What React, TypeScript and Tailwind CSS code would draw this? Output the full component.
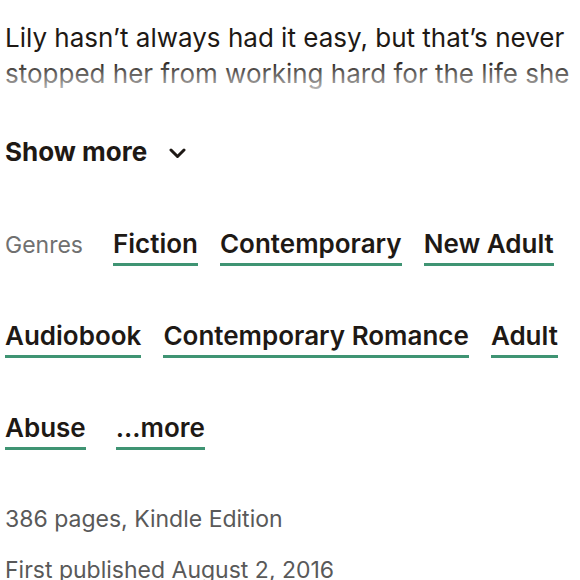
import React from "react";

const genresRow = ["Fiction", "Contemporary", "New Adult", "Audiobook", "Contemporary Romance", "Adult", "Abuse"];

function Genre({ label, className = "" }: { label: string; className?: string }) {
  return (
    <a className={`inline-block border-b-[3px] border-[#3f9473] pb-[3px] text-[26px] font-semibold leading-[32px] text-[#1e1915] ${className}`}>
      {label}
    </a>
  );
}

export default function App() {
  return (
    <div className="min-h-[580px] bg-white px-[5px] font-['Inter',sans-serif] text-[#1e1915]">
      <div className="relative pt-[20px]">
        <p className="max-h-[72px] overflow-hidden text-[26px] leading-[36px]">
          Lily hasn’t always had it easy, but that’s never stopped her from working hard for the life she wants. She’s come a long way from the small town in Maine where she grew up—she graduated from college, moved to Boston, and started her own business.
        </p>
        <div className="pointer-events-none absolute inset-x-0 bottom-0 h-[32px] bg-linear-to-b from-white/0 to-white/75" />
      </div>

      <button className="mt-[42px] flex h-[36px] items-center gap-[22px] text-[26px] font-bold leading-[36px] text-[#1e1915]">
        <span>Show more</span>
        <svg width="17" height="11" viewBox="0 0 17 11" fill="none" className="mt-[2px]">
          <path d="M2 2 L8.5 8.5 L15 2" stroke="#1e1915" strokeWidth="3" strokeLinecap="round" strokeLinejoin="round" />
        </svg>
      </button>

      <div className="mt-[58px] flex flex-wrap items-baseline gap-x-[22px] gap-y-[54px]">
        <span className="mr-[8px] text-[23px] leading-[32px] text-[#707070]">Genres</span>
        {genresRow.map((g) => (
          <Genre key={g} label={g} />
        ))}
        <Genre label="...more" className="ml-[8px]" />
      </div>

      <div className="mt-[53px] flex flex-col gap-[19px] text-[23px] leading-[32px] text-[#595959]">
        <p>386 pages, Kindle Edition</p>
        <p>First published August 2, 2016</p>
      </div>
    </div>
  );
}
